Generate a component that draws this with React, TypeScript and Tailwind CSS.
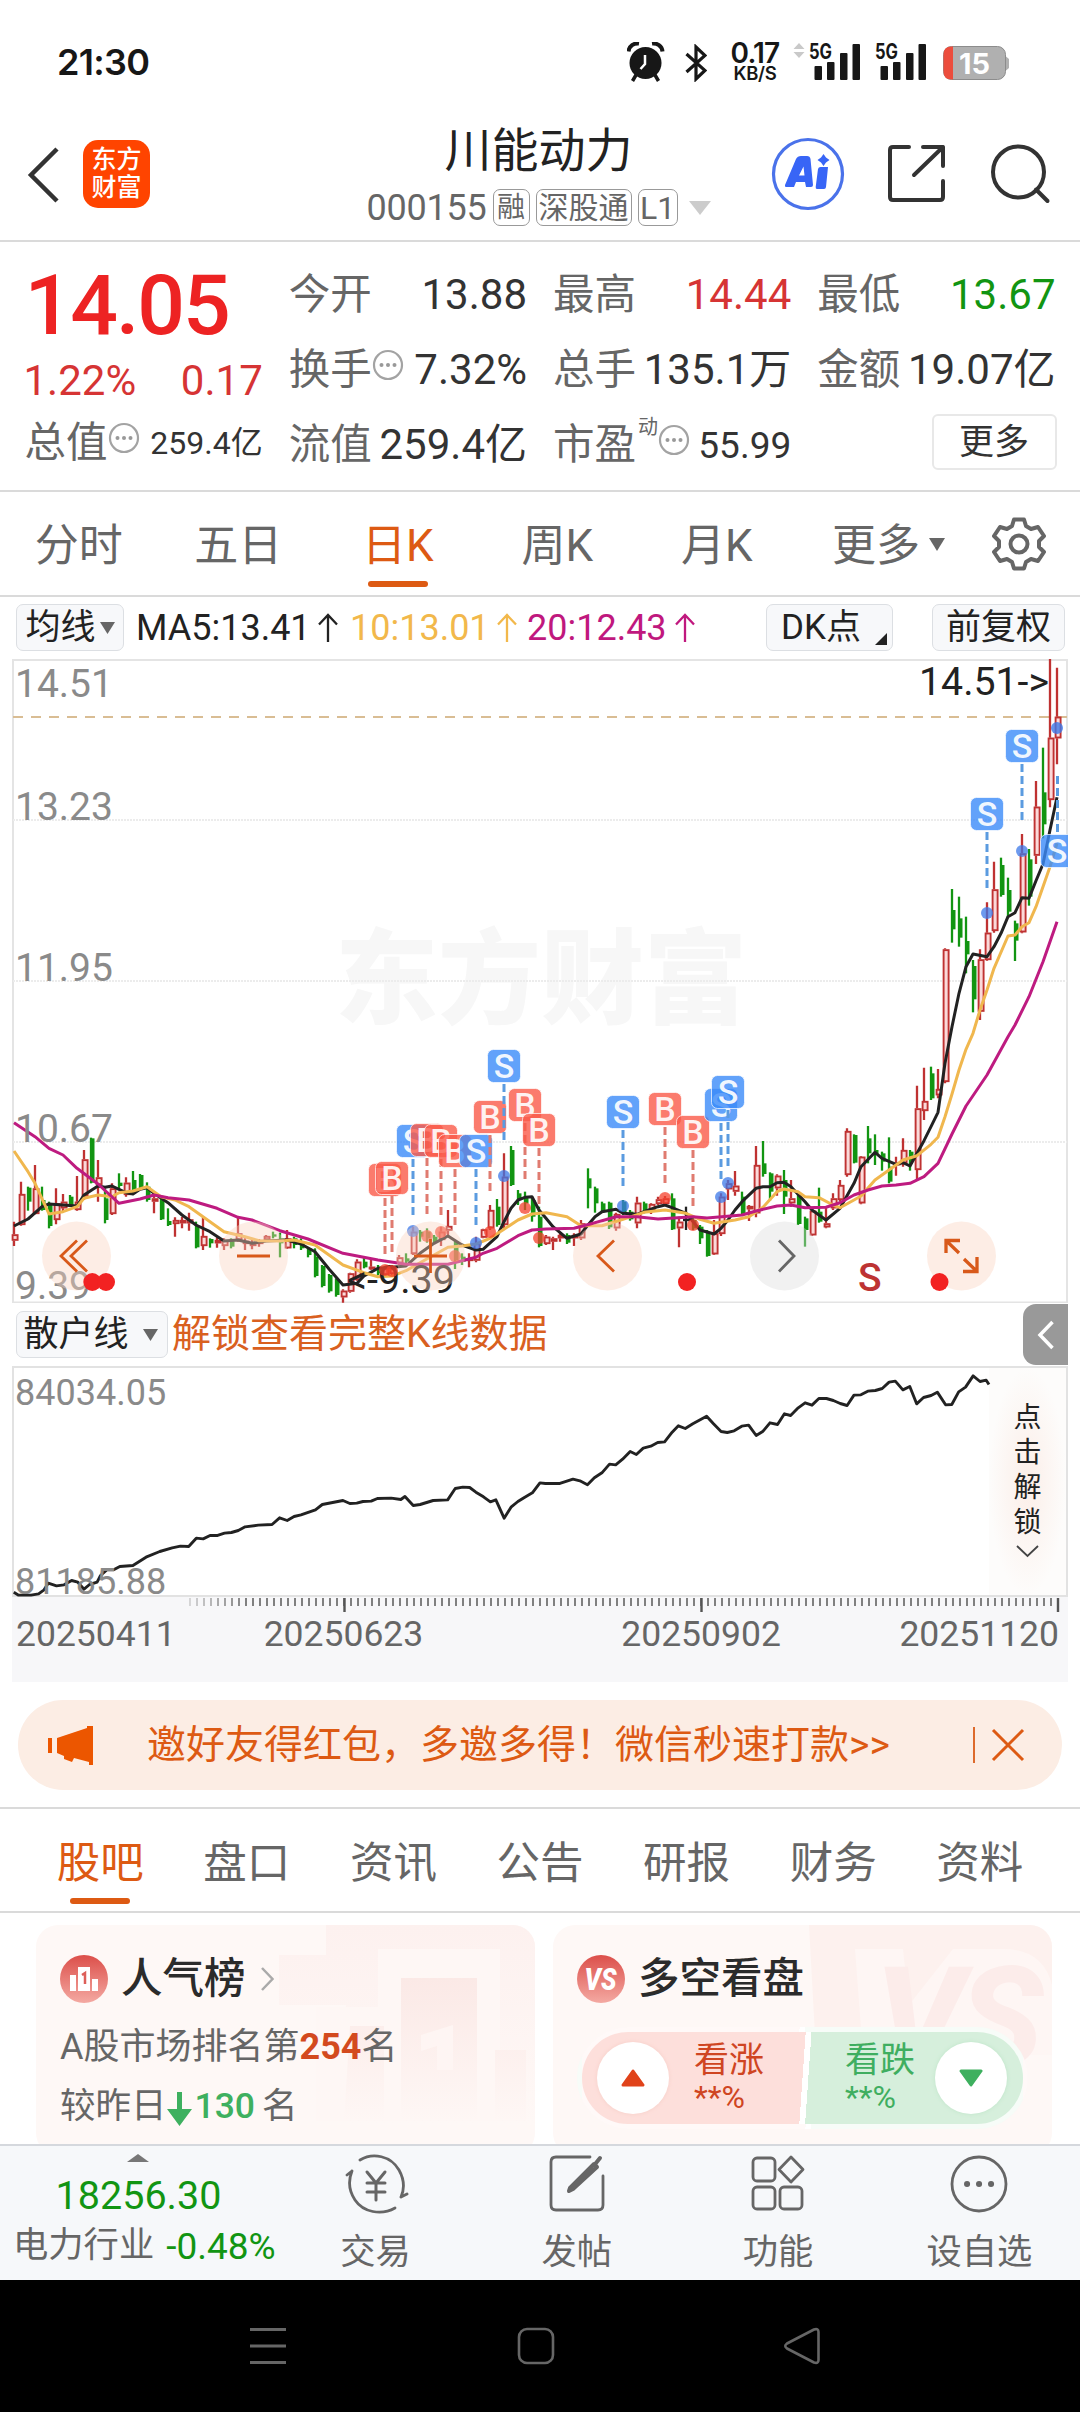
import React from "react";

/* ---------- chart data ---------- */

const FIRST_X = 14;
const STEP = 7;
const BASE_Y = 361;
const UNIT = 1 / 3;

type Kind = "r" | "g" | "k";
type Candle = [Kind, number, number, number, number];

// kind, high, low, body top, body bottom
const candles: Candle[] = [
  ["r", 605, 678, 643, 662], ["r", 485, 617, 522, 615], ["g", 500, 572, 503, 545], ["r", 435, 583, 505, 582],
  ["g", 500, 572, 540, 570], ["g", 545, 625, 550, 618], ["r", 505, 613, 550, 600], ["r", 522, 575, 545, 565],
  ["g", 525, 560, 530, 555], ["r", 468, 572, 545, 570], ["r", 390, 540, 418, 530], ["g", 353, 490, 355, 488],
  ["r", 420, 545, 472, 495], ["g", 505, 610, 535, 600], ["r", 490, 585, 505, 582], ["g", 460, 510, 488, 498],
  ["r", 472, 530, 488, 525], ["g", 453, 520, 480, 515], ["g", 462, 510, 465, 508], ["g", 487, 545, 500, 540],
  ["r", 525, 580, 535, 545], ["g", 535, 600, 540, 598], ["g", 565, 618, 603, 615], ["r", 592, 650, 600, 612],
  ["r", 590, 625, 600, 610], ["r", 578, 632, 598, 610], ["g", 605, 685, 620, 682], ["r", 590, 690, 648, 678],
  ["g", 655, 683, 657, 670], ["r", 652, 683, 660, 670], ["r", 655, 690, 660, 678], ["g", 655, 685, 660, 680],
  ["r", 592, 665, 640, 660], ["r", 655, 690, 662, 672], ["r", 655, 688, 668, 678], ["r", 658, 680, 660, 672],
  ["r", 645, 665, 648, 660], ["g", 635, 655, 643, 650], ["g", 638, 712, 655, 670], ["r", 630, 687, 655, 685],
  ["g", 650, 685, 655, 675], ["g", 655, 690, 668, 685], ["g", 682, 712, 685, 705], ["g", 685, 772, 710, 768],
  ["g", 735, 802, 738, 798], ["g", 762, 818, 765, 814], ["g", 775, 830, 780, 825], ["r", 808, 848, 812, 832],
  ["r", 758, 818, 760, 815], ["r", 718, 782, 725, 780], ["g", 710, 745, 725, 742], ["r", 715, 750, 740, 748],
  ["g", 735, 765, 740, 760], ["r", 738, 770, 745, 765], ["r", 735, 770, 745, 762], ["r", 705, 735, 712, 730],
  ["g", 700, 730, 715, 725], ["r", 620, 705, 635, 702], ["g", 630, 665, 635, 650], ["g", 625, 668, 635, 655],
  ["g", 645, 672, 650, 665], ["r", 620, 678, 635, 660], ["r", 570, 645, 618, 632], ["g", 660, 747, 665, 720],
  ["g", 700, 735, 710, 725], ["r", 700, 742, 715, 723], ["r", 650, 727, 670, 722], ["r", 626, 655, 628, 653],
  ["r", 555, 630, 570, 625], ["g", 537, 620, 560, 615], ["r", 400, 628, 470, 615], ["g", 378, 498, 390, 495],
  ["g", 510, 555, 520, 535], ["g", 515, 570, 530, 550], ["g", 530, 605, 540, 590], ["g", 560, 682, 590, 678],
  ["r", 645, 675, 650, 672], ["r", 650, 690, 655, 665], ["r", 640, 665, 645, 655], ["g", 640, 672, 645, 668],
  ["r", 640, 678, 645, 655], ["r", 600, 660, 610, 655], ["g", 445, 565, 475, 505], ["g", 500, 578, 505, 550],
  ["g", 545, 575, 550, 570], ["g", 545, 627, 548, 622], ["r", 578, 632, 582, 625], ["g", 540, 585, 545, 580],
  ["g", 570, 602, 575, 598], ["r", 530, 625, 548, 610], ["g", 545, 580, 550, 575], ["r", 550, 582, 552, 570],
  ["r", 530, 555, 538, 552], ["r", 528, 555, 535, 552], ["g", 520, 630, 535, 628], ["r", 590, 682, 605, 625],
  ["k", 560, 630, 596, 604], ["g", 590, 630, 600, 625], ["g", 615, 672, 620, 655], ["g", 630, 710, 640, 708],
  ["r", 600, 705, 640, 703], ["r", 520, 648, 530, 642], ["r", 480, 540, 490, 508], ["r", 453, 527, 497, 515],
  ["g", 515, 585, 530, 580], ["r", 555, 603, 558, 568], ["r", 378, 592, 435, 580], ["g", 363, 470, 430, 462],
  ["g", 457, 542, 460, 515], ["r", 463, 527, 467, 505], ["g", 450, 582, 480, 530], ["r", 480, 560, 535, 550],
  ["g", 515, 615, 520, 612], ["g", 590, 680, 595, 630], ["r", 570, 648, 572, 646], ["g", 503, 608, 575, 605],
  ["r", 560, 625, 610, 622], ["r", 520, 570, 535, 565], ["r", 480, 545, 495, 540], ["r", 325, 470, 333, 465],
  ["g", 343, 430, 345, 428], ["r", 408, 553, 410, 550], ["g", 318, 430, 355, 400], ["g", 343, 435, 390, 405],
  ["g", 395, 452, 400, 425], ["g", 352, 490, 440, 485], ["r", 410, 467, 428, 436], ["r", 355, 440, 390, 430],
  ["g", 390, 452, 395, 425], ["r", 197, 478, 265, 450], ["r", 143, 300, 243, 273], ["g", 140, 240, 160, 235],
  ["r", 147, 235, 207, 226], ["r", -215, 190, -212, 186], ["g", -393, -232, -330, -272], ["g", -370, -220, -305, -247],
  ["g", -310, -140, -237, -197], ["g", -180, -23, -162, -62], ["r", -212, 0, -182, -25], ["r", -353, -178, -262, -180],
  ["r", -475, -262, -392, -267], ["g", -487, -370, -465, -375], ["g", -427, -308, -390, -325], ["g", -298, -177, -290, -238],
  ["r", -558, -260, -500, -263], ["g", -513, -343, -482, -370], ["r", -717, -468, -640, -493], ["g", -817, -545, -683, -587],
  ["r", -1083, -638, -847, -660], ["r", -1057, -767, -910, -845],
];

const ma5 = [0,618,2,597,4,560,5,552,7,555,9,558,10,525,12,498,13,502,14,498,15,508,16,518,17,522,18,508,19,503,20,520,22,548,24,585,26,615,28,635,30,663,32,660,34,670,36,663,39,660,41,672,43,695,45,747,47,795,49,790,50,768,52,745,54,742,56,738,58,700,60,670,62,648,64,675,66,690,67,688,69,650,70,605,71,565,72,540,73,532,74,530,75,570,76,595,77,620,79,655,81,642,82,615,83,590,84,575,86,568,87,580,89,583,90,575,92,560,93,555,94,563,96,580,98,630,100,642,101,625,102,600,103,570,104,545,106,505,107,500,108,500,109,488,110,487,111,500,113,545,114,570,116,600,118,565,120,490,121,440,123,397,124,415,126,433,127,428,128,438,129,400,130,362,131,320,132,277,133,130,134,20,135,-80,136,-160,137,-198,139,-190,140,-220,141,-260,142,-310,143,-322,144,-367,145,-365,146,-418,147,-468,148,-570,149,-668];
const ma10 = [0,393,2,455,3,490,5,582,7,575,9,560,10,535,12,525,14,530,15,518,17,513,19,500,20,515,21,530,23,540,25,560,27,590,30,635,33,650,35,662,38,663,40,660,43,675,45,705,47,735,50,758,52,770,54,768,56,752,58,728,60,705,62,682,64,678,66,672,68,655,70,628,72,600,74,582,76,578,79,590,81,617,84,617,87,598,90,577,93,570,96,580,98,598,100,610,103,600,105,590,107,562,109,515,110,507,112,515,113,530,115,533,117,555,118,563,120,540,121,528,123,480,125,450,127,420,129,407,131,373,132,352,133,290,134,222,135,150,136,88,137,40,138,-30,139,-90,140,-155,142,-252,143,-255,144,-280,145,-292,146,-340,147,-400,148,-460,149,-530];
const ma20 = [0,308,3,350,5,385,7,405,9,445,12,492,15,550,18,537,20,525,22,533,25,540,29,565,32,592,34,600,38,632,42,657,47,700,52,720,56,733,62,733,64,722,66,712,67,700,69,685,72,647,74,630,76,627,80,625,83,608,86,590,89,590,92,597,97,590,99,594,104,585,106,573,109,558,111,555,113,563,116,562,118,548,120,525,122,510,124,498,126,495,128,490,130,470,132,430,134,342,136,258,139,165,142,50,143,15,145,-70,147,-175,149,-295];

const cx = (i: number) => FIRST_X + STEP * i;
const cy = (v: number) => BASE_Y + v * UNIT;
const toPoints = (a: number[]) => {
  const out: string[] = [];
  for (let i = 0; i < a.length; i += 2) out.push(`${cx(a[i])},${cy(a[i + 1]).toFixed(1)}`);
  return out.join(" ");
};

// kind, x, badge y, dot y
const trades: ["B" | "S", number, number, number][] = [
  ["B", 385, 521, 611], ["B", 392, 519, 612], ["S", 413, 482, 572], ["B", 427, 481, 577], ["B", 441, 482, 573],
  ["B", 455, 492, 597], ["S", 476, 492, 584], ["B", 490, 458, 573], ["S", 504, 407, 517], ["B", 525, 446, 549],
  ["B", 539, 471, 579], ["S", 623, 453, 547], ["B", 665, 450, 539], ["B", 693, 473, 566], ["S", 721, 446, 538],
  ["S", 728, 433, 524], ["S", 987, 155, 254], ["S", 1022, 87, 192],
];

const retail = "20,875 27,884 45,884 56,880 64,868 70,848 82,856 93,853 104,840 113,845 122,866 130,852 141,845 146,825 155,808 165,808 174,798 193,795 212,770 232,753 250,742 262,737 274,738 285,713 295,715 305,705 316,705 326,698 336,696 346,690 356,679 375,674 395,672 406,652 417,660 427,648 437,643 458,628 468,612 498,600 508,609 518,608 527,603 539,602 548,594 568,593 582,597 588,588 600,615 610,612 629,600 650,598 661,564 672,560 682,561 691,575 702,589 712,604 720,598 732,653 742,620 752,603 762,590 773,577 784,547 792,549 813,549 832,536 842,541 853,553 863,532 874,517 885,491 894,493 904,476 915,453 924,462 934,443 945,437 955,426 965,424 976,395 985,376 995,384 1006,370 1026,347 1036,370 1047,393 1056,396 1066,391 1077,377 1087,374 1098,405 1108,392 1118,367 1129,372 1139,340 1148,345 1159,322 1169,307 1179,314 1189,294 1200,294 1210,300 1220,309 1230,315 1240,284 1250,283 1260,272 1271,270 1281,264 1291,245 1300,242 1311,268 1321,258 1331,310 1341,291 1352,285 1361,275 1373,313 1382,312 1392,274 1402,260 1413,226 1423,243 1432,239 1436,252";

/* ---------- small parts ---------- */

function Badge({ kind, x, y }: { kind: "B" | "S"; x: number; y: number }) {
  return (
    <g>
      <rect x={x - 16.5} y={y - 16.5} width="33" height="33" rx="6" fill={kind === "S" ? "#3b8bf9" : "#fa5a48"} fillOpacity="0.8" stroke="#fff" strokeOpacity="0.7" strokeWidth="1" />
      <text x={x} y={y + 12} textAnchor="middle" fontSize="34" fontWeight="500" fill="#fff" fillOpacity="0.92">{kind}</text>
    </g>
  );
}

function Hint() {
  return (
    <svg className="-mt-[10px] h-[32px] w-[32px] shrink-0" viewBox="0 0 32 32" fill="none">
      <circle cx="16" cy="16" r="14" stroke="#a3a3a3" strokeWidth="2.200" />
      <circle cx="9.500" cy="16" r="2" fill="#999" />
      <circle cx="16" cy="16" r="2" fill="#999" />
      <circle cx="22.500" cy="16" r="2" fill="#999" />
    </svg>
  );
}

function Down({ className }: { className: string }) {
  return (
    <svg className={className} viewBox="0 0 10 10" preserveAspectRatio="none">
      <path d="M0 0H10L5 10Z" fill="currentColor" />
    </svg>
  );
}

function ArrowUp() {
  return (
    <svg className="h-[30px] w-[20px]" viewBox="0 0 20 30" fill="none" stroke="currentColor" strokeWidth="2.300">
      <path d="M10 29V2M1 11.500L10 2L19 11.500" />
    </svg>
  );
}

function Signal() {
  return (
    <svg className="h-[38px] w-[52px] overflow-visible" viewBox="0 0 52 38">
      <text x="0" y="16.500" fontSize="21" fontWeight="700" textLength="23" lengthAdjust="spacingAndGlyphs" fill="#171717" fontFamily="Inter">5G</text>
      <rect x="5.500" y="24" width="7.500" height="14" rx="1" fill="#171717" />
      <rect x="18" y="20" width="7.500" height="18" rx="1" fill="#171717" />
      <rect x="31" y="11" width="7.500" height="27" rx="1" fill="#171717" />
      <rect x="43.500" y="2" width="7.500" height="36" rx="1" fill="#171717" />
    </svg>
  );
}

function StatusBar() {
  return (
    <div className="flex h-[116px] items-start pt-[42px] font-[Inter] text-[#171717]">
      <span className="ml-[57px] mt-[3px] w-[92px] text-[36px] leading-[34px] font-semibold tracking-[-0.7px]">21:30</span>
      <svg className="ml-[478px] h-[40px] w-[38px]" viewBox="0 0 38 40">
        <circle cx="18.500" cy="21" r="16" fill="#171717" />
        <path d="M1.500 9.500C2 4 7 .800 12 1.500M35.500 9.500C35 4 30 .800 25 1.500" fill="none" stroke="#171717" strokeWidth="4" />
        <path d="M9 33L5.500 39M28 33L31.500 39" stroke="#171717" strokeWidth="3.500" />
        <path d="M18 13V22L13.500 27" fill="none" stroke="#fff" strokeWidth="2.500" />
      </svg>
      <svg className="ml-[20px] mt-[2px] h-[38px] w-[22px]" viewBox="0 0 22 38" fill="none" stroke="#171717" strokeWidth="3.200">
        <path d="M1.500 10L20 26.500L11 35V3L20 11.500L1.500 28" />
      </svg>
      <div className="ml-[21px] flex w-[54px] flex-col items-center">
        <span className="text-[28px] leading-[23px] font-semibold tracking-[-0.8px]">0.17</span>
        <span className="text-[18.500px] leading-[17px] font-semibold tracking-[-0.3px]">KB/S</span>
      </div>
      <svg className="ml-[11px] mt-[1px] h-[16px] w-[12px]" viewBox="0 0 12 16" fill="#c9c9c9">
        <path d="M6 0L11.500 6H.500ZM6 15L11.500 9H.500Z" />
      </svg>
      <div className="ml-[4px] flex gap-[14px]">
        <Signal />
        <Signal />
      </div>
      <svg className="ml-[16px] mt-[4px] h-[34px] w-[67px]" viewBox="0 0 67 34">
        <rect x=".500" y=".500" width="62" height="33" rx="8" fill="#b0b0b0" stroke="#8c8c8c" />
        <path d="M10 .500H8.500Q.500 .500 .500 8.500V25.500Q.500 33.500 8.500 33.500H10Z" fill="#ec4d3d" />
        <path d="M63 10.500L66 13V22L63 24.500Z" fill="#b0b0b0" />
        <text x="31.500" y="28" textAnchor="middle" fontSize="29" fontWeight="700" fill="#fff" fontFamily="Inter">15</text>
      </svg>
    </div>
  );
}

function Header() {
  return (
    <div className="grid h-[126px] grid-cols-[1fr_auto_1fr] border-b-[2px] border-[#dadada]">
      <div className="flex items-start">
        <svg className="ml-[26px] mt-[30px] h-[58px] w-[34px]" viewBox="0 0 34 58" fill="none" stroke="#333" strokeWidth="4.500">
          <path d="M31 3L5 29L31 55" />
        </svg>
        <div className="ml-[23px] mt-[24px] flex h-[68px] w-[67px] flex-col items-center justify-center rounded-[15px] bg-[#ff4400] text-[25px] leading-[28px] font-medium text-white">
          <span>东方</span>
          <span>财富</span>
        </div>
      </div>
      <div className="-ml-[3px] flex flex-col items-center text-[#666]">
        <div className="mt-[9px] text-[47px] leading-[52px] text-[#222]">川能动力</div>
        <div className="mt-[11px] flex h-[40px] items-center gap-[6px] text-[30px] leading-none">
          <span className="text-[36px] tracking-[-0.2px]">000155</span>
          <span className="-mt-[1px] flex h-[37px] w-[37px] items-center justify-center rounded-[7px] border border-[#999] text-[28px]">融</span>
          <span className="-mt-[1px] flex h-[37px] w-[96px] items-center justify-center rounded-[7px] border border-[#999]">深股通</span>
          <span className="-mt-[1px] flex h-[37px] w-[40px] items-center justify-center rounded-[7px] border border-[#999] text-[32px]">L1</span>
          <Down className="ml-[5px] h-[14px] w-[22px] text-[#ccc]" />
        </div>
      </div>
      <div className="flex items-start justify-end pr-[29px]">
        <svg className="mt-[21px] h-[74px] w-[74px]" viewBox="0 0 74 74">
          <circle cx="37" cy="37" r="34.500" fill="#fff" stroke="#4a72ea" strokeWidth="3.200" />
          <path fillRule="evenodd" fill="#3865f6" d="M14 48L25 22Q26.500 19 30 19H36Q39 19 39.500 22L42 48Q42 50 40 50H35L34 45H25L23 50H15Q13.500 50 14 48ZM28 38.500H33.500L32.500 29.500Z" />
          <path fill="#3865f6" d="M47 32Q47.500 30 49.500 30H57L55 50Q54.800 52 53 52H46Q44.500 52 44.700 50ZM52.500 17L55 20.500L58.500 23L55 25.500L52.500 29L50 25.500L46.500 23L50 20.500Z" />
        </svg>
        <svg className="ml-[42px] mt-[28px] h-[60px] w-[60px]" viewBox="0 0 60 60" fill="none" stroke="#333" strokeWidth="4" strokeLinecap="round" strokeLinejoin="round">
          <path d="M22 3H6Q3 3 3 6V53Q3 56 6 56H53Q56 56 56 53V37M36 3H56V22M56 3L27 31" />
        </svg>
        <svg className="ml-[42px] mt-[27px] h-[62px] w-[62px]" viewBox="0 0 62 62" fill="none" stroke="#333" strokeWidth="4" strokeLinecap="round">
          <circle cx="29.500" cy="29" r="25.500" />
          <path d="M47 46.500L58.500 58" />
        </svg>
      </div>
    </div>
  );
}

function Row({ label, value, color = "text-[#333]", hint = false, size = "text-[42px]" }: { label: string; value: string; color?: string; hint?: boolean; size?: string }) {
  return (
    <div className="flex h-[42px] items-center justify-between whitespace-nowrap leading-none">
      <span className="flex items-center text-[41.500px] text-[#666]">
        {label}
        {hint && <Hint />}
      </span>
      <span className={`${size} ${color}`}>{value}</span>
    </div>
  );
}

function Quote() {
  return (
    <div className="grid h-[250px] grid-cols-4 gap-x-[26px] border-b-[2px] border-[#dadada] px-[24.500px] leading-none">
      <div className="flex flex-col">
        <div className="mt-[22px] text-[84px] leading-[83px] font-medium tracking-[-2px] text-[#ed2323]">14.05</div>
        <div className="-ml-[1px] mt-[13px] flex justify-between text-[42px] text-[#d63434]">
          <span>1.22%</span>
          <span>0.17</span>
        </div>
        <div className="mt-[20px]">
          <Row label="总值" value="259.4亿" hint size="text-[32px]" />
        </div>
      </div>
      <div className="flex flex-col gap-[33px] pt-[32px]">
        <Row label="今开" value="13.88" />
        <Row label="换手" value="7.32%" hint />
        <Row label="流值" value="259.4亿" />
      </div>
      <div className="flex flex-col gap-[33px] pt-[32px]">
        <Row label="最高" value="14.44" color="text-[#d63434]" />
        <Row label="总手" value="135.1万" />
        <div className="flex h-[42px] items-center text-[41.500px] whitespace-nowrap text-[#666]">
          市盈
          <span className="mb-[36px] ml-[2px] text-[20px]">动</span>
          <Hint />
          <span className="ml-auto text-[37px] text-[#333]">55.99</span>
        </div>
      </div>
      <div className="flex flex-col gap-[33px] pt-[32px]">
        <Row label="最低" value="13.67" color="text-[#129512]" />
        <Row label="金额" value="19.07亿" />
        <div className="-mt-[10px] -mr-[1px] flex h-[56px] w-[125px] items-center justify-center self-end rounded-[6px] border-[2px] border-[#e8e8e8] text-[35px] text-[#333]">更多</div>
      </div>
    </div>
  );
}

function PeriodTabs() {
  const tabs = ["分时", "五日", "日K", "周K", "月K"];
  return (
    <div className="flex h-[105px] border-b-[2px] border-[#dadada] text-[44px] leading-none text-[#666]">
      {tabs.map((t) => (
        <div key={t} className={`-ml-[1px] mr-[1px] flex w-[159.500px] flex-col items-center pt-[32px] ${t === "日K" ? "text-[#dd5a13]" : ""}`}>
          {t}
          {t === "日K" && <div className="mt-[13px] h-[6px] w-[60px] rounded-full bg-[#dd5a13]" />}
        </div>
      ))}
      <div className="flex w-[182px] items-start justify-center gap-[9px] pt-[32px]">
        更多
        <Down className="mt-[14px] h-[13px] w-[16px]" />
      </div>
      <svg className="ml-[11px] mt-[24px] h-[56px] w-[56px]" viewBox="0 0 56 56" fill="none" stroke="#666" strokeWidth="4" strokeLinejoin="round">
        <path d="M23 3.500H33L35 10L40 13L47 11L53 20L48 25V31L53 36L47 45L40 43L35 46L33 52.500H23L21 46L16 43L9 45L3 36L8 31V25L3 20L9 11L16 13L21 10Z" />
        <circle cx="28" cy="28" r="8.500" />
      </svg>
    </div>
  );
}

function MaBar() {
  return (
    <div className="flex h-[63px] items-center pb-[2px] pl-[16px] pr-[15px] text-[36px] leading-none whitespace-nowrap text-[#222]">
      <div className="flex h-[47px] w-[108px] items-center justify-center gap-[4px] rounded-[7px] border border-[#dcdfe3] bg-[#f7f8fa] text-[35px]">
        均线
        <Down className="h-[12px] w-[15px] text-[#666]" />
      </div>
      <span className="ml-[12px] flex w-[214px] items-center justify-between pr-[12px]">MA5:13.41<ArrowUp /></span>
      <span className="flex w-[177px] items-center justify-between pr-[10px] text-[#f2b84b]">10:13.01<ArrowUp /></span>
      <span className="flex w-[168px] items-center justify-between text-[#c0187e]">20:12.43<ArrowUp /></span>
      <div className="ml-auto flex h-[47px] w-[127px] items-center rounded-[7px] border border-[#dcdfe3] bg-[#f7f8fa] pl-[14px] text-[35px]">
        DK点
        <svg className="ml-[14px] mt-[22px] h-[12px] w-[12px]" viewBox="0 0 12 12">
          <path d="M12 0V12H0Z" fill="#222" />
        </svg>
      </div>
      <div className="ml-[39px] flex h-[47px] w-[133px] items-center justify-center rounded-[7px] border border-[#dcdfe3] bg-[#f7f8fa] text-[35px]">前复权</div>
    </div>
  );
}

function KChart() {
  const colors = { r: "#bf3232", g: "#129512", k: "#222" };
  return (
    <svg className="block h-[644px] w-[1080px]" viewBox="0 0 1080 644" fill="none">
      <text x="335" y="357" fontSize="103" fontWeight="900" fill="#f7f7f7" textLength="412">东方财富</text>
      <g stroke="#e4e4e4" strokeWidth="2">
        <path d="M13 1H1067V643.500H13Z" />
        <path d="M13 161H1067M13 322H1067M13 483H1067" stroke="#ececec" strokeDasharray="2 1" />
      </g>
      <path d="M13 58H1067" stroke="#d9bd94" strokeWidth="1.800" strokeDasharray="10 8" />

      {candles.map(([kind, high, low, top, bottom], i) => {
        const x = cx(i);
        const c = colors[kind];
        return (
          <g key={i}>
            {kind === "r" && <rect x={x - 1.4} y={cy(top) + 0.8} width="5" height={Math.max(cy(bottom) - cy(top) - 1.6, 1)} fill="#fbd9d9" stroke={c} strokeWidth="1.900" />}
            {kind === "g" && <rect x={x - 1} y={cy(top)} width="4.500" height={cy(bottom) - cy(top)} fill={c} />}
            {kind === "k" && <rect x={x - 3} y={cy(top)} width="7" height="2.500" fill={c} />}
            {kind === "r" ? (
              <path d={`M${x} ${cy(high)}V${cy(top)}M${x} ${cy(bottom)}V${cy(low)}`} stroke={c} strokeWidth="2.300" />
            ) : (
              <path d={`M${x} ${cy(high)}V${cy(low)}`} stroke={c} strokeWidth="2.300" />
            )}
          </g>
        );
      })}
      <polyline points={toPoints(ma5)} stroke="#222" strokeWidth="3" strokeLinejoin="round" />
      <polyline points={toPoints(ma10)} stroke="#f0b74e" strokeWidth="3" strokeLinejoin="round" />
      <polyline points={toPoints(ma20)} stroke="#be1b80" strokeWidth="3" strokeLinejoin="round" />

      <g fontSize="39" fill="#8a8a8a">
        <text x="15" y="38">14.51</text>
        <text x="15" y="161">13.23</text>
        <text x="15" y="322">11.95</text>
        <text x="15" y="483">10.67</text>
        <text x="15" y="640">9.39</text>
      </g>
      <g fontSize="38" fill="#222">
        <text x="919" y="36" textLength="130" lengthAdjust="spacingAndGlyphs">14.51-&gt;</text>
        <text x="347" y="634" textLength="108" lengthAdjust="spacingAndGlyphs">&lt;-9.39</text>
      </g>

      {trades.map(([k, x, y, dot], i) => (
        <g key={i}>
          <path d={`M${x} ${y + 18}V${y + 76}`} stroke={k === "S" ? "#5b9be0" : "#e07b70"} strokeWidth="3" strokeDasharray="8 4" />
          <circle cx={x} cy={dot} r="6" fill={k === "S" ? "#3c78e8" : "#f4402c"} fillOpacity="0.75" />
          <Badge kind={k} x={x} y={y} />
        </g>
      ))}
      <path d="M1057.500 117V173" stroke="#5b9be0" strokeWidth="3" strokeDasharray="8 4" />
      <circle cx="1057" cy="69" r="6" fill="#3c78e8" fillOpacity="0.8" />
      <svg x="0" y="0" width="1068" height="644">
        <Badge kind="S" x={1057} y={192} />
      </svg>

      {[76.5, 253.5, 430.5, 607.5, 961.5].map((x) => (
        <circle key={x} cx={x} cy="597" r="34.500" fill="#fbd3bf" fillOpacity="0.4" />
      ))}
      <circle cx="784.500" cy="597" r="34.500" fill="#dcdcdc" fillOpacity="0.4" />
      <g stroke="#d8591a" strokeWidth="2.800">
        <path d="M77 581.500L61 597L77 612.500M87 581.500L71 597L87 612.500" />
        <path d="M237 597H270M414 597H447M430.500 580V614" />
        <path d="M614 581.500L598 597L614 612.500" />
        <path d="M946 594V581.500H960M946 581.500L959 594M977 598V612.500H963M977 612.500L964 600" strokeWidth="3.300" />
      </g>
      <path d="M779 581.500L794 597L779 612.500" stroke="#666" strokeWidth="2.800" />
      <g fill="#f22222">
        <circle cx="92.300" cy="623" r="9" />
        <circle cx="106" cy="623" r="9" />
        <circle cx="687" cy="623" r="9" />
        <circle cx="939.500" cy="623" r="9" />
      </g>
      <text x="858" y="632" fontSize="39" fontWeight="500" fill="#bd3333">S</text>
    </svg>
  );
}

function RetailBar() {
  return (
    <div className="flex h-[63px] items-center pl-[16px] pr-[12px] leading-none">
      <div className="flex h-[47px] w-[152px] items-center justify-center gap-[14px] rounded-[7px] border border-[#dcdfe3] bg-[#f7f8fa] pr-[3px] text-[35px] text-[#222]">
        散户线
        <Down className="h-[12px] w-[15px] text-[#666]" />
      </div>
      <span className="ml-[4px] text-[39px] text-[#d9601f]">解锁查看完整K线数据</span>
      <div className="ml-auto flex h-[61px] w-[45px] items-center justify-center rounded-l-[13px] bg-[#999]">
        <svg className="h-[30px] w-[18px]" viewBox="0 0 18 30" fill="none" stroke="#fff" strokeWidth="3.500">
          <path d="M15.500 2L3 15L15.500 28" />
        </svg>
      </div>
    </div>
  );
}

function RetailChart() {
  return (
    <div className="flex h-[231px] w-[1080px]">
      <svg className="block h-[231px] w-[1080px]" viewBox="0 0 1080 231" fill="none">
        <defs>
          <radialGradient id="glow" cx="0.5" cy="0.5" r="0.5">
            <stop offset="0" stopColor="#fbeee8" />
            <stop offset="1" stopColor="#fdfcfb" />
          </radialGradient>
        </defs>
        <path d="M13 1H1067V230H13Z" stroke="#e2e2e2" strokeWidth="2" />
        <rect x="989" y="2" width="77" height="227" fill="url(#glow)" />
        <polyline points={retail} transform="translate(0,-65.5) scale(0.6887,0.33333)" vectorEffect="non-scaling-stroke" stroke="#222" strokeWidth="2.900" strokeLinejoin="round" />
        <g fontSize="36" fill="#8a8a8a">
          <text x="15" y="39">84034.05</text>
          <text x="15" y="228">81185.88</text>
        </g>
        <g fontSize="28" fill="#222" textAnchor="middle">
          <text x="1027.500" y="61">点</text>
          <text x="1027.500" y="96">击</text>
          <text x="1027.500" y="131">解</text>
          <text x="1027.500" y="166">锁</text>
        </g>
        <path d="M1017 180L1027.500 190L1038 180" stroke="#444" strokeWidth="1.800" />
      </svg>
    </div>
  );
}

function DateAxis() {
  return (
    <div className="ml-[12px] mr-[12px] h-[85px] bg-[#f7f7f9] text-[35.500px] leading-none text-[#666]">
      <svg className="block h-[17px] w-full" viewBox="12 0 1056 17">
        {Array.from({ length: 125 }, (_, n) => 183 + n * 7).map((x) => (
          <path key={x} d={`M${x + 7} 1V9`} stroke="#6b6b6b" strokeWidth="1.700" strokeOpacity={x < 235 ? (x - 160) / 80 : 1} />
        ))}
        <path d="M344.500 1V15M701.500 1V15M1058 1V15" stroke="#555" strokeWidth="2.400" />
      </svg>
      <div className="mt-[3px] flex pl-[4px] pr-[9px]">
        <span>20250411</span>
        <span className="ml-[88px]">20250623</span>
        <span className="ml-auto mr-[118.500px]">20250902</span>
        <span>20251120</span>
      </div>
    </div>
  );
}

function Banner() {
  return (
    <div className="mx-[18px] mt-[18px] flex h-[90px] items-center rounded-[45px] bg-[#fcede4] text-[#dd5a13]">
      <svg className="ml-[30px] h-[40px] w-[46px]" viewBox="0 0 46 40" fill="#ec5600">
        <path d="M0 13H4V28H0ZM9 13L39 3V1H45V40H41V37L26 33L24 37L16 34V31L9 28Z" />
      </svg>
      <span className="ml-[53px] text-[39px] leading-none">邀好友得红包，多邀多得！微信秒速打款&gt;&gt;</span>
      <div className="ml-auto h-[36px] w-[2px] bg-[#dd6a2c]" />
      <svg className="ml-[16px] mr-[37px] h-[34px] w-[34px]" viewBox="0 0 34 34" stroke="#dd5a13" strokeWidth="3">
        <path d="M2 2L32 32M32 2L2 32" />
      </svg>
    </div>
  );
}

function SectionTabs() {
  const tabs = ["股吧", "盘口", "资讯", "公告", "研报", "财务", "资料"];
  return (
    <div className="mt-[17px] flex h-[106px] border-y-[2px] border-[#dadada] px-[27px] text-[43.500px] leading-none text-[#666]">
      {tabs.map((t, i) => (
        <div key={t} className={`flex flex-1 flex-col items-center pt-[33px] ${i === 0 ? "text-[#dd5a13]" : ""}`}>
          {t}
          {i === 0 && <div className="mt-[12px] h-[6px] w-[60px] rounded-full bg-[#dd5a13]" />}
        </div>
      ))}
    </div>
  );
}

function RankCard() {
  return (
    <div className="relative h-[230px] w-[499px] shrink-0 overflow-hidden rounded-[22px] bg-[#fef8f6]">
      <svg className="absolute inset-0 h-[230px] w-[499px]" viewBox="0 0 499 230">
        <defs>
          <linearGradient id="podium" x1="0" y1="0" x2="0" y2="1">
            <stop offset="0" stopColor="#fbe9e6" />
            <stop offset="1" stopColor="#fef7f5" />
          </linearGradient>
          <linearGradient id="podiumBack" x1="0" y1="0" x2="0" y2="1">
            <stop offset="0" stopColor="#fdf1ef" />
            <stop offset="1" stopColor="#fef8f6" />
          </linearGradient>
        </defs>
        <path d="M243 30H290V0H499V200H310V80H243Z" fill="url(#podiumBack)" />
        <path d="M342 24H464V196H280V82H342Z" fill="#fef7f5" />
        <path d="M365 53H441V196H365ZM314 101H348V196H308ZM459 125H490V196H459Z" fill="url(#podium)" />
        <path d="M385 110L417 100V145H401V121L385 126Z" fill="#fef5f3" />
      </svg>
      <div className="relative pl-[24px]">
        <div className="flex h-[108px] items-center">
          <svg className="h-[48px] w-[48px]" viewBox="0 0 48 48">
            <defs>
              <linearGradient id="dotRank" x1="0" y1="0" x2="0" y2="1">
                <stop offset="0" stopColor="#dc4f4a" />
                <stop offset="1" stopColor="#f4a9a2" />
              </linearGradient>
            </defs>
            <circle cx="24" cy="24" r="24" fill="url(#dotRank)" />
            <path d="M10 20H16V36H10ZM18 12H30V36H18ZM32 24H38V36H32Z" fill="#fff" />
            <path d="M22 20L25 18V29" fill="none" stroke="#dd5f59" strokeWidth="2.500" />
          </svg>
          <span className="ml-[13px] text-[41.500px] leading-none font-medium text-[#2b2b2b]">人气榜</span>
          <svg className="ml-[14px] h-[24px] w-[15px]" viewBox="0 0 15 24" fill="none" stroke="#aaa" strokeWidth="2.500">
            <path d="M2 1L12.500 12L2 23" />
          </svg>
        </div>
        <div className="mt-[-4px] text-[36px] leading-[36px] text-[#666]">
          A股市场排名第<b className="font-bold text-[#d34a1e]">254</b>名
        </div>
        <div className="mt-[21px] flex items-center text-[35.500px] leading-[36px] text-[#666]">
          较昨日
          <svg className="mt-[6px] h-[34px] w-[25px]" viewBox="0 0 25 34" fill="#3eb05f">
            <path d="M10 0H15V17H25L12.500 34L0 17H10Z" />
          </svg>
          <span className="ml-[3px] font-medium text-[#3eb05f]">130</span>
          <span className="ml-[7px]">名</span>
        </div>
      </div>
    </div>
  );
}

function VoteCard() {
  return (
    <div className="relative h-[230px] w-[499px] shrink-0 overflow-hidden rounded-[22px] bg-[#fef8f6]">
      <svg className="absolute inset-0 h-[230px] w-[499px]" viewBox="0 0 499 230">
        <path d="M256 0H499V110H262Z" fill="#fdf1ee" />
        <path d="M302 24H350L356 80L400 24H450Q490 24 499 60V130H310Z" fill="#fef6f4" />
        <text x="322" y="142" fontSize="140" fontWeight="800" fontStyle="italic" fill="#fcecea" textLength="168">VS</text>
      </svg>
      <div className="relative pl-[24px]">
        <div className="flex h-[108px] items-center">
          <svg className="h-[48px] w-[48px]" viewBox="0 0 48 48">
            <circle cx="24" cy="24" r="24" fill="url(#dotRank)" />
            <text x="23.500" y="35" textAnchor="middle" fontSize="31" fontWeight="900" fontStyle="italic" textLength="32" lengthAdjust="spacingAndGlyphs" fill="#fff">VS</text>
          </svg>
          <span className="ml-[13px] text-[41.500px] leading-none font-medium text-[#2b2b2b]">多空看盘</span>
        </div>
        <div className="mt-[-6px] flex h-[102px] w-[451px] overflow-hidden rounded-full border-[5px] border-white/80 bg-[linear-gradient(94deg,#fddfdb_0_50%,#fff_50%_51.300%,#d6efdc_51.300%)]">
          <div className="flex flex-1 items-center pl-[15px]">
            <div className="flex h-[72px] w-[72px] items-center justify-center rounded-full bg-white shadow-[0_0_4px_#f6cfc8]">
              <svg className="h-[18px] w-[24px]" viewBox="0 0 24 18">
                <path d="M12 2L22 16H2Z" fill="#e0431a" stroke="#e0431a" strokeWidth="3" strokeLinejoin="round" />
              </svg>
            </div>
            <div className="ml-[25px] flex flex-col text-[35px] leading-[38px] text-[#cf4522]">
              <span>看涨</span>
              <span className="text-[32px] leading-[34px]">**%</span>
            </div>
          </div>
          <div className="flex flex-1 items-center justify-end pr-[16px]">
            <div className="mr-[20px] flex flex-col text-[35px] leading-[38px] text-[#3fae60]">
              <span>看跌</span>
              <span className="text-[32px] leading-[34px]">**%</span>
            </div>
            <div className="flex h-[72px] w-[72px] items-center justify-center rounded-full bg-white shadow-[0_0_4px_#bfe5c9]">
              <svg className="h-[18px] w-[24px]" viewBox="0 0 24 18">
                <path d="M12 16L22 2H2Z" fill="#3eb05f" stroke="#3eb05f" strokeWidth="3" strokeLinejoin="round" />
              </svg>
            </div>
          </div>
        </div>
      </div>
    </div>
  );
}

function BottomItem({ label, children }: { label: string; children: React.ReactNode }) {
  return (
    <div className="flex flex-1 flex-col items-center pt-[8px]">
      <svg className="h-[60px] w-[66px]" viewBox="0 0 66 60" fill="none" stroke="#666" strokeWidth="2.800" strokeLinecap="round" strokeLinejoin="round">
        {children}
      </svg>
      <span className="mt-[21px] text-[35.300px] leading-none">{label}</span>
    </div>
  );
}

function BottomBar() {
  return (
    <div className="flex h-[136px] border-t-[2px] border-[#d5d8dd] bg-[#f6f8fa] leading-none text-[#666]">
      <div className="w-[275px] whitespace-nowrap">
        <svg className="ml-[127px] mt-[8px] block h-[8px] w-[22px]" viewBox="0 0 22 8">
          <path d="M11 0L22 8H0Z" fill="#777" />
        </svg>
        <div className="mt-[14px] pl-[2px] text-center text-[39.500px] text-[#129512]">18256.30</div>
        <div className="mt-[12px] flex items-center pl-[13px] text-[35.300px]">
          电力行业<span className="ml-[12px] text-[37px] text-[#129512]">-0.48%</span>
        </div>
      </div>
      <BottomItem label="交易">
        <path d="M17 6C30 -2 48 2 56 16C61 25 62 34 58 43M52 54C38 62 20 58 12 46C6 37 5 27 9 17M9 17L4 21M58 43L64 40" />
        <path d="M24 18L33 29L42 18M33 29V46M24 29H42M24 38H42" strokeWidth="3" />
      </BottomItem>
      <BottomItem label="发帖">
        <path d="M46 3H12Q7 3 7 8V51Q7 56 12 56H54Q59 56 59 51V22" />
        <path d="M52 9L56 4M26 34L50 10L53 13L29 35L25 37Z" strokeWidth="4" />
      </BottomItem>
      <BottomItem label="功能">
        <rect x="8" y="4" width="22" height="23" rx="4" />
        <path d="M46 3L58 15.500L46 28L34 15.500Z" />
        <rect x="8" y="33" width="22" height="22" rx="4" />
        <rect x="35" y="33" width="22" height="22" rx="4" />
      </BottomItem>
      <BottomItem label="设自选">
        <circle cx="33" cy="30" r="27" />
        <path d="M21 30H21.100M33 30H33.100M45 30H45.100" strokeWidth="6" />
      </BottomItem>
    </div>
  );
}

function NavBar() {
  return (
    <div className="flex h-[132px] items-center bg-black pl-[248px]">
      <svg className="h-[40px] w-[40px]" viewBox="0 0 40 40" stroke="#666" strokeWidth="3">
        <path d="M2 3.500H38M2 20H38M2 36.500H38" />
      </svg>
      <svg className="ml-[228px] h-[40px] w-[40px]" viewBox="0 0 40 40" fill="none" stroke="#666" strokeWidth="2.600">
        <rect x="3" y="3" width="34" height="34" rx="8" />
      </svg>
      <svg className="ml-[226px] h-[40px] w-[40px]" viewBox="0 0 40 40" fill="none" stroke="#666" strokeWidth="2.600" strokeLinejoin="round">
        <path d="M5 17.500L32 3.500Q36.500 2 36.500 6V34Q36.500 38 32 36.500L5 22.500Q1.500 20 5 17.500Z" />
      </svg>
    </div>
  );
}

export default function App() {
  return (
    <div className="flex h-[2412px] w-[1080px] flex-col overflow-hidden bg-white font-[Roboto,'Noto_Sans_CJK_SC',sans-serif]">
      <StatusBar />
      <Header />
      <Quote />
      <PeriodTabs />
      <MaBar />
      <div className="-mt-[1px] shrink-0"><KChart /></div>
      <RetailBar />
      <RetailChart />
      <DateAxis />
      <Banner />
      <SectionTabs />
      <div className="flex h-[231px] shrink-0 gap-[18px] overflow-hidden pl-[36px] pt-[12px]">
        <RankCard />
        <VoteCard />
      </div>
      <BottomBar />
      <NavBar />
    </div>
  );
}
